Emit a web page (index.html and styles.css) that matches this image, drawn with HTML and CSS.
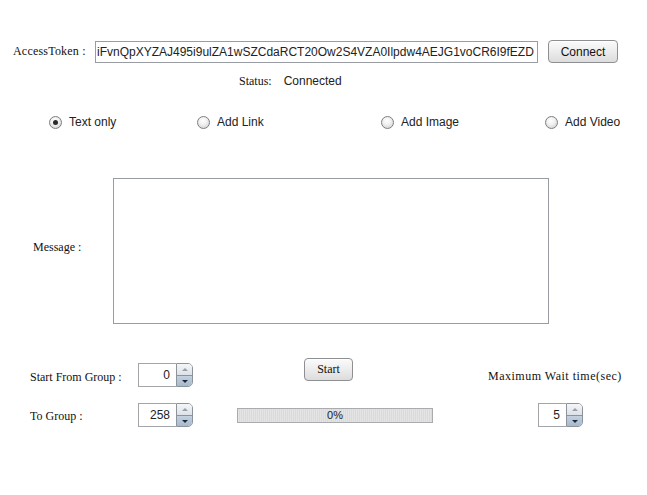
FILE: index.html
```html
<!DOCTYPE html>
<html>
<head>
<meta charset="utf-8">
<link rel="stylesheet" href="styles.css">
</head>
<body>
<div class="app">
  <div class="row token-row">
    <span class="serif token-label">AccessToken :</span>
    <div class="field token-field"><span>iFvnQpXYZAJ495i9ulZA1wSZCdaRCT20Ow2S4VZA0Ilpdw4AEJG1voCR6I9fEZD</span></div>
    <button class="btn connect">Connect</button>
  </div>
  <div class="row status-row">
    <span class="serif">Status:</span>
    <span class="sans status-val">Connected</span>
  </div>
  <div class="row radio-row">
    <label class="radio r1"><span class="dot on"></span>Text only</label>
    <label class="radio r2"><span class="dot"></span>Add Link</label>
    <label class="radio r3"><span class="dot"></span>Add Image</label>
    <label class="radio r4"><span class="dot"></span>Add Video</label>
  </div>
  <div class="row msg-row">
    <span class="serif msg-label">Message :</span>
    <div class="textarea"></div>
  </div>
  <div class="row ctl-row1">
    <span class="serif grp-label">Start From Group :</span>
    <div class="spinner s1"><div class="spin-val">0</div><div class="spin-btns"><span class="up"></span><span class="down"></span></div></div>
    <button class="btn start serif">Start</button>
    <span class="serif maxwait">Maximum Wait time(sec)</span>
  </div>
  <div class="row ctl-row2">
    <span class="serif grp-label">To Group :</span>
    <div class="spinner s1"><div class="spin-val">258</div><div class="spin-btns"><span class="up"></span><span class="down"></span></div></div>
    <div class="progress">0%</div>
    <div class="spinner s3"><div class="spin-val">5</div><div class="spin-btns"><span class="up"></span><span class="down"></span></div></div>
  </div>
</div>
</body>
</html>
```
FILE: styles.css
```css
html, body {
  margin: 0;
  padding: 0;
  background: #ffffff;
}
body {
  width: 647px;
  height: 495px;
  overflow: hidden;
  font-family: "Liberation Sans", Arial, sans-serif;
  font-size: 12px;
  color: #222;
}
.serif {
  font-family: "Liberation Serif", "Times New Roman", serif;
  font-size: 12px;
  color: #111;
}
.sans {
  font-family: "Liberation Sans", Arial, sans-serif;
}
.app {
  display: flex;
  flex-direction: column;
}
.row {
  display: flex;
  align-items: center;
}
.token-row {
  margin-top: 40px;
  height: 23px;
  padding-left: 13px;
}
.token-label {
  width: 82px;
  letter-spacing: 0.2px;
}
.field {
  box-sizing: border-box;
  border: 1px solid #9a9ca3;
  background: #fff;
}
.token-field {
  width: 443px;
  height: 22px;
  display: flex;
  justify-content: flex-start;
  align-items: center;
  overflow: hidden;
  white-space: nowrap;
  padding-left: 1px;
  font-size: 12px;
  color: #222;
}
.btn {
  box-sizing: border-box;
  border: 1px solid #8e8f93;
  border-radius: 4px;
  background: linear-gradient(#fbfbfb, #ececec 50%, #dcdcdc);
  font-family: "Liberation Sans", Arial, sans-serif;
  font-size: 12px;
  color: #111;
  padding: 0;
  box-shadow: inset 0 1px 0 #fff;
}
.connect {
  margin-left: 10px;
  width: 70px;
  height: 23px;
}
.status-row {
  margin-top: 12px;
  padding-left: 239px;
  height: 12px;
}
.status-val {
  margin-left: 12px;
  color: #222;
}
.radio-row {
  margin-top: 27px;
  height: 16px;
}
.radio {
  display: flex;
  align-items: center;
  color: #222;
}
.dot {
  box-sizing: border-box;
  width: 13px;
  height: 13px;
  border-radius: 50%;
  border: 1px solid #7b7e84;
  background: radial-gradient(circle at 45% 35%, #ffffff 0, #f1f1f1 40%, #c9cbcf 100%);
  margin-right: 7px;
  position: relative;
}
.dot.on::after {
  content: "";
  position: absolute;
  left: 3px;
  top: 3px;
  width: 5px;
  height: 5px;
  border-radius: 50%;
  background: #2a2a2a;
}
.r1 { margin-left: 49px; width: 148px; }
.r2 { width: 184px; }
.r3 { width: 164px; }
.msg-row {
  margin-top: 48px;
  height: 146px;
}
.msg-label {
  margin-left: 33px;
  width: 80px;
  margin-top: -8px;
}
.textarea {
  box-sizing: border-box;
  width: 436px;
  height: 146px;
  border: 1px solid #9a9ca3;
  background: #fff;
}
.ctl-row1 {
  margin-top: 34px;
  height: 29px;
  align-items: flex-start;
}
.grp-label {
  margin-left: 30px;
  width: 108px;
  margin-top: 12px;
}
.spinner {
  display: flex;
  width: 55px;
  height: 24px;
  margin-top: 5px;
}
.spin-val {
  box-sizing: border-box;
  width: 38px;
  height: 24px;
  border: 1px solid #a3a5aa;
  border-right: none;
  background: #fff;
  text-align: right;
  padding-right: 6px;
  line-height: 22px;
  font-size: 12px;
  color: #222;
}
.spin-btns {
  box-sizing: border-box;
  width: 17px;
  height: 24px;
  border: 1px solid #8d939b;
  border-radius: 0 5px 5px 0;
  overflow: hidden;
  display: flex;
  flex-direction: column;
}
.spin-btns span {
  flex: 1;
  position: relative;
}
.spin-btns .up {
  background: linear-gradient(#f4f6f8, #dde2e8);
  border-bottom: 1px solid #8d939b;
}
.spin-btns .down {
  background: linear-gradient(#c4d2e0, #a6b9cc);
}
.spin-btns .up::after,
.spin-btns .down::after {
  content: "";
  position: absolute;
  left: 5px;
  width: 0;
  height: 0;
  border-left: 3px solid transparent;
  border-right: 3px solid transparent;
}
.spin-btns .up::after {
  top: 4px;
  border-bottom: 3px solid #9aa0a8;
}
.spin-btns .down::after {
  top: 4px;
  border-top: 3px solid #1e2a38;
}
.start {
  margin-left: 111px;
  width: 49px;
  height: 23px;
  font-family: "Liberation Serif", "Times New Roman", serif;
  font-size: 12px;
}
.maxwait {
  margin-left: 135px;
  margin-top: 11px;
  font-size: 12px;
  letter-spacing: 0.5px;
  white-space: nowrap;
}
.ctl-row2 {
  margin-top: 16px;
  height: 29px;
  align-items: flex-start;
}
.ctl-row2 .grp-label {
  margin-top: 6px;
}
.ctl-row2 .spinner {
  margin-top: 0;
}
.progress {
  box-sizing: border-box;
  margin-left: 44px;
  margin-top: 5px;
  width: 196px;
  height: 15px;
  border: 1px solid #a9abae;
  background: repeating-linear-gradient(90deg, #e4e4e4 0, #e4e4e4 1px, #dadada 1px, #dadada 2px);
  text-align: center;
  font-size: 11px;
  line-height: 13px;
  color: #222;
}
.s3 {
  margin-left: 105px;
  width: 45px;
}
.s3 .spin-val {
  width: 28px;
}
```
